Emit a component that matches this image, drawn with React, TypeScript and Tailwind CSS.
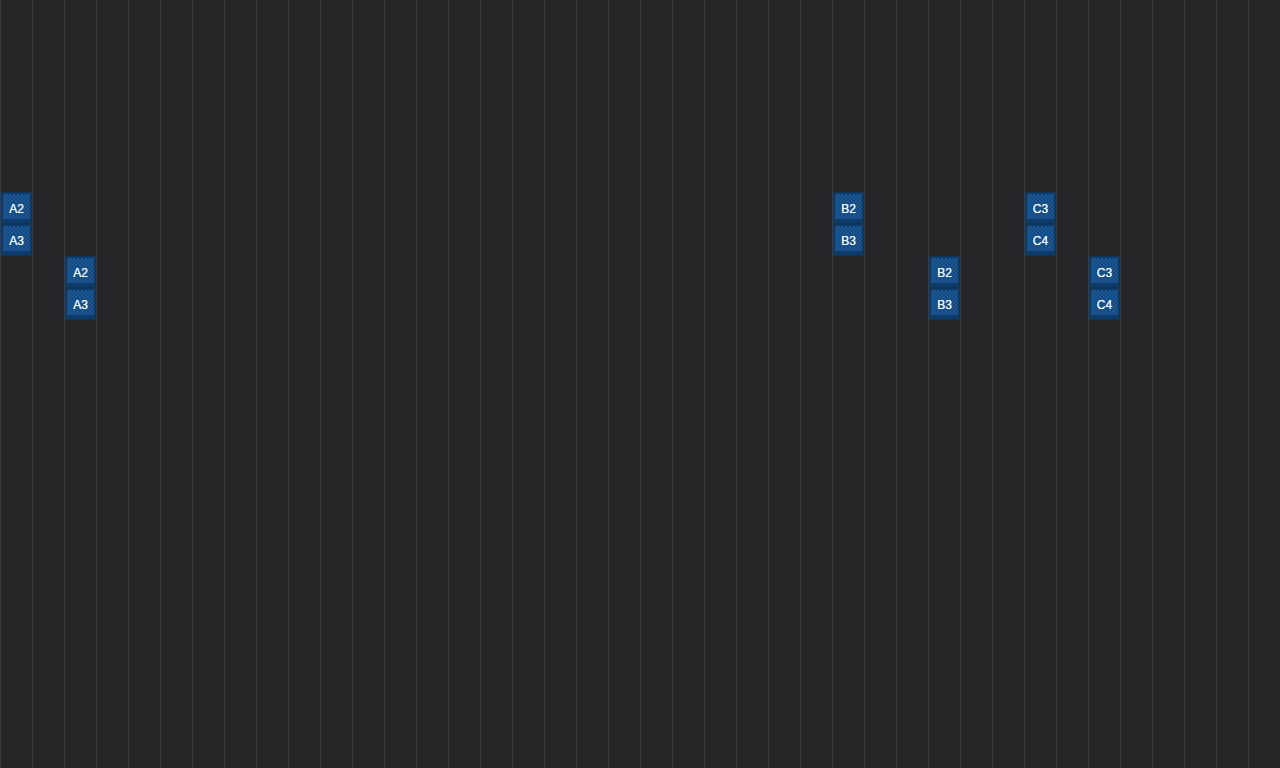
import React from "react";

type Pad = { label: string; col: number; row: number };

// pads placed on the 32px step grid (col/row are 1-based grid lines)
const pads: Pad[] = [
  { label: "A2", col: 1, row: 7 },
  { label: "A3", col: 1, row: 8 },
  { label: "A2", col: 3, row: 9 },
  { label: "A3", col: 3, row: 10 },
  { label: "B2", col: 27, row: 7 },
  { label: "B3", col: 27, row: 8 },
  { label: "B2", col: 30, row: 9 },
  { label: "B3", col: 30, row: 10 },
  { label: "C3", col: 33, row: 7 },
  { label: "C4", col: 33, row: 8 },
  { label: "C3", col: 35, row: 9 },
  { label: "C4", col: 35, row: 10 },
];

const colStart: Record<number, string> = {
  1: "col-start-1",
  3: "col-start-3",
  27: "col-start-27",
  30: "col-start-30",
  33: "col-start-33",
  35: "col-start-35",
};

const rowStart: Record<number, string> = {
  7: "row-start-7",
  8: "row-start-8",
  9: "row-start-9",
  10: "row-start-10",
};

function PadCell({ pad }: { pad: Pad }) {
  return (
    <div className={`${colStart[pad.col]} ${rowStart[pad.row]} pl-px`}>
      <div className="w-[31px] h-[32px] border-2 border-[#0e3864] bg-[repeating-conic-gradient(#1a5896_0_25%,#14497f_0_50%)] bg-[length:4px_4px] shadow-[inset_0_-3px_0_rgba(8,40,80,0.55)] flex items-center justify-center pt-px">
        <span className="text-[12px] font-normal text-[#f2f6fb] font-['Liberation_Sans',Arial,sans-serif] leading-none [text-shadow:0_0_0.4px_#fff]">
          {pad.label}
        </span>
      </div>
    </div>
  );
}

export default function App() {
  return (
    <div className="relative w-full h-screen overflow-hidden bg-[#262628]">
      {/* column lines */}
      <div className="flex h-full">
        {Array.from({ length: 40 }).map((_, i) => (
          <div key={i} className="w-8 shrink-0 h-full border-l border-[#3c3c3e]" />
        ))}
      </div>

      <div className="absolute inset-0 grid grid-cols-[repeat(40,32px)] grid-rows-[repeat(24,32px)]">
        {pads.map((p, i) => (
          <PadCell key={i} pad={p} />
        ))}
      </div>
    </div>
  );
}
